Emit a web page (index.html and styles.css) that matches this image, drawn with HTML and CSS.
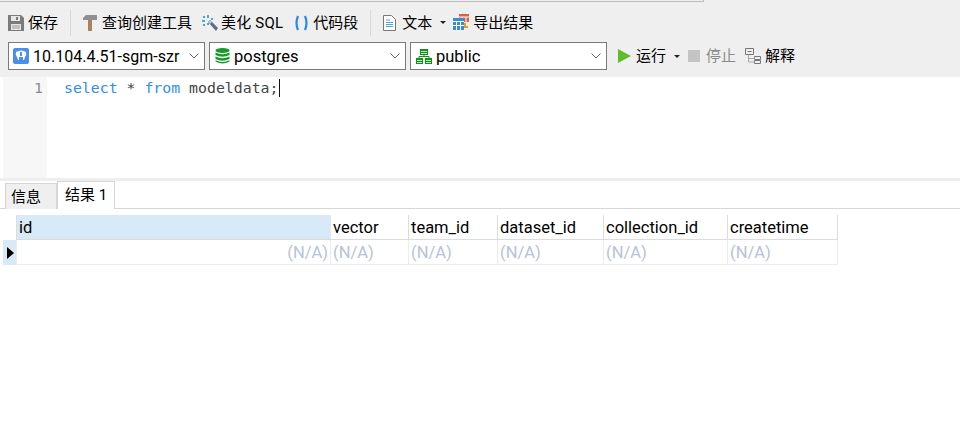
FILE: index.html
```html
<!DOCTYPE html>
<html lang="en">
<head>
  <meta charset="UTF-8">
  <title>Query</title>
  <link rel="stylesheet" href="styles.css">
</head>
<body>
<div class="top-edge"></div>

<div class="toolbar row-one">
  <div class="tool save">
    <svg width="16" height="16" viewBox="0 0 16 16"><path d="M0 0h13l3 3v13H0z" fill="#7b7b7b"/><rect x="3" y="1" width="9" height="5" fill="#e6e6e6"/><rect x="8" y="2" width="2" height="3" fill="#7b7b7b"/><rect x="3" y="9" width="10" height="6" fill="#e6e6e6"/><path d="M4 11h8M4 13h8" stroke="#999"/></svg>
    <span>保存</span>
  </div>
  <div class="sep sep-a"></div>
  <div class="tool hammer">
    <svg width="14" height="16" viewBox="0 0 14 16"><path d="M0 3l3-3h11v5H0z" fill="#909090"/><rect x="5" y="5" width="4" height="11" fill="#a5835f"/></svg>
    <span>查询创建工具</span>
  </div>
  <div class="tool wand">
    <svg width="16" height="16" viewBox="0 0 16 16"><path d="M6 7l2-2 8 8-2 3z" fill="#5c6f80"/><path d="M6 7l2-2 2 2-2 2z" fill="#b8c4ce"/><path d="M5 0h2v3H5zM5 8h2v2H5zM0 5h3v2H0zM9 3h2v2H9zM1 1h2v2H1zM1 9h2v2H1z" fill="#45a9dc"/></svg>
    <span>美化 SQL</span>
  </div>
  <div class="tool snippet">
    <svg width="15" height="16" viewBox="0 0 15 16"><path d="M4 1Q1 8 4 15M11 1q3 7 0 14" fill="none" stroke="#2e86e6" stroke-width="2.2"/></svg>
    <span>代码段</span>
  </div>
  <div class="sep sep-b"></div>
  <div class="tool doc">
    <svg width="13" height="16" viewBox="0 0 13 16"><path d="M.5.5h8l4 4v11H.5z" fill="#fff" stroke="#777"/><path d="M3 5h4M3 7.500h7M3 9.500h7M3 11.500h7" stroke="#4aa3df"/></svg>
    <span>文本</span>
    <i class="caret"></i>
  </div>
  <div class="tool export">
    <svg width="17" height="17" viewBox="0 0 17 17"><rect x="6" y="0" width="10" height="8" fill="#d0654a"/><path d="M9 3v5M13 3v5M6 3h10" stroke="#fff"/><rect x="0" y="4" width="11" height="12" fill="#3b8ccb"/><path d="M0 7.500h11M0 11.500h11M3.500 7v9M7.500 7v9" stroke="#fff"/><path d="M12 9v4h3" fill="none" stroke="#f09a1f" stroke-width="2"/></svg>
    <span>导出结果</span>
  </div>
</div>

<div class="toolbar row-two">
  <div class="select sel-conn">
    <svg width="16" height="16" viewBox="0 0 16 16"><rect width="16" height="16" rx="2" fill="#4a8ef0"/><path d="M3 4q5-3 10 0 1 3-1 5l-1 3h-1V9H6v3H5L4 9Q2 7 3 4z" fill="#fff"/><path d="M7 4h2v4H7z" fill="#4a8ef0"/></svg>
    <span class="sel-text">10.104.4.51-sgm-szr</span>
    <svg class="chev" width="10" height="6" viewBox="0 0 10 6"><path d="M.5.500l4.500 4.500 4.500-4.500" fill="none" stroke="#666"/></svg>
  </div>
  <div class="select sel-db">
    <svg width="15" height="16" viewBox="0 0 15 16"><ellipse cx="7.500" cy="2.500" rx="7" ry="2.500" fill="#159a2c"/><path d="M.5 4.500q7 3.500 14 0v2.500q-7 3.500-14 0zM.5 8.500q7 3.500 14 0V11q-7 3.500-14 0zM.5 12.300q7 3.500 14 0v1.200q-7 4-14 0z" fill="#159a2c"/></svg>
    <span class="sel-text">postgres</span>
    <svg class="chev" width="10" height="6" viewBox="0 0 10 6"><path d="M.5.500l4.500 4.500 4.500-4.500" fill="none" stroke="#666"/></svg>
  </div>
  <div class="select sel-schema">
    <svg width="16" height="15" viewBox="0 0 16 15"><path d="M4 0h8v6H4zM0 9h7v6H0zM9 9h7v6H9z" fill="#12911f"/><path d="M5 2.500h6M5 4.500h6M1 11.500h5M1 13.500h5M10 11.500h5M10 13.500h5" stroke="#bfe5c3"/><path d="M8 6v2M3 9V7.500h10V9" fill="none" stroke="#12911f"/></svg>
    <span class="sel-text">public</span>
    <svg class="chev" width="10" height="6" viewBox="0 0 10 6"><path d="M.5.500l4.500 4.500 4.500-4.500" fill="none" stroke="#666"/></svg>
  </div>
  <div class="tool run">
    <svg width="13" height="14" viewBox="0 0 13 14"><path d="M0 0l13 7-13 7z" fill="#63bb2c"/></svg>
    <span>运行</span>
    <i class="caret"></i>
  </div>
  <div class="tool stop">
    <i class="stop-box"></i>
    <span>停止</span>
  </div>
  <div class="tool explain">
    <svg width="16" height="16" viewBox="0 0 16 16"><g fill="none" stroke="#777"><path d="M.5.500h8v6h-8zM9.500 8.500h6v3h-6zM9.500 12.500h6v3h-6z"/><path d="M2.500 3.500h4"/><path d="M3.500 7v3.500h6M3.500 10v4h6" stroke="#aaa"/></g></svg>
    <span>解释</span>
  </div>
</div>

<div class="editor">
  <div class="gutter">1</div>
  <div class="code"><span class="kw">select</span> * <span class="kw">from</span> modeldata;<i class="cursor"></i></div>
</div>

<div class="split"></div>

<div class="tabs">
  <div class="tab">信息</div>
  <div class="tab active">结果 1</div>
</div>

<div class="grid">
  <div class="corner"></div>
  <div class="head selected">id</div>
  <div class="head">vector</div>
  <div class="head">team_id</div>
  <div class="head">dataset_id</div>
  <div class="head">collection_id</div>
  <div class="head">createtime</div>

  <div class="marker"><i></i></div>
  <div class="cell right">(N/A)</div>
  <div class="cell">(N/A)</div>
  <div class="cell">(N/A)</div>
  <div class="cell">(N/A)</div>
  <div class="cell">(N/A)</div>
  <div class="cell">(N/A)</div>
</div>
</body>
</html>
```

FILE: styles.css
```css
html, body {
  margin: 0;
  height: 100%;
  overflow: hidden;
}

/* the strip right of the top line keeps the toolbar colour */
body {
  background: linear-gradient(#efefef 2px, #fff 2px);
  color: #000;
  font-family: Roboto, "Noto Sans CJK SC", sans-serif;
  font-size: 15px;
}

.top-edge {
  box-sizing: border-box;
  width: 704px;
  height: 2px;
  border-right: 1px solid #bdbdbd;
  border-bottom: 1px solid #bdbdbd;
}

.top-edge, .toolbar {
  background: #efefef;
}

.toolbar {
  display: flex;
  align-items: center;
  box-sizing: border-box;
  padding-left: 8px;
}

.row-one {
  height: 38px;
  padding-top: 3px;
}

.row-two {
  height: 37px;
  padding-top: 2px;
  padding-bottom: 7px;
}

.tool {
  display: flex;
  align-items: center;
  white-space: nowrap;
}

.tool span {
  font-size: 15px;
  line-height: 20px;
}

.save span { margin-left: 4px; }
.sep {
  width: 1px;
  height: 26px;
  background: #d9d9d9;
}
.sep-a { margin-left: 12px; }
.hammer { margin-left: 12px; }
.hammer span { margin-left: 5px; }
.wand { margin-left: 10px; }
.wand span { margin-left: 3px; letter-spacing: 0.2px; }
.snippet { margin-left: 11px; }
.snippet span { margin-left: 4px; }
.sep-b { margin-left: 12px; }
.doc { margin-left: 12px; }
.doc span { margin-left: 6px; }
.export { margin-left: 7px; }
.export span { margin-left: 3px; }

.caret {
  width: 0;
  height: 0;
  margin-left: 8px;
  border-left: 3px solid transparent;
  border-right: 3px solid transparent;
  border-top: 3px solid #222;
}

.select {
  display: flex;
  align-items: center;
  box-sizing: border-box;
  width: 197px;
  height: 28px;
  margin-right: 4px;
  padding: 0 5px 0 5px;
  background: #fff;
  border: 1px solid #7a7a7a;
}

.sel-conn { padding-left: 4px; }

.sel-text {
  flex: 1;
  margin-left: 4px;
  font-size: 16.500px;
}

.sel-conn .sel-text {
  font-size: 16px;
}

.run { margin-left: 7px; }
.run span { margin-left: 5px; }
.stop { margin-left: 8px; }
.stop span { margin-left: 6px; color: #8a8a8a; }
.explain { margin-left: 9px; }
.explain span { margin-left: 4px; }

.stop-box {
  width: 12px;
  height: 12px;
  background: #c4c4c4;
}

.editor {
  display: flex;
  height: 101px;
  padding-left: 3px;
}

.gutter {
  box-sizing: border-box;
  width: 44px;
  padding: 1px 4px 0 0;
  text-align: right;
  background: #f7f7f7;
  color: #8c8c8c;
  font: 14.800px/20px "DejaVu Sans Mono", monospace;
}

.code {
  height: 20px;
  margin-top: 1px;
  padding-left: 17px;
  color: #444;
  font: 14.850px/20px "DejaVu Sans Mono", monospace;
  white-space: pre;
}

.kw { color: #2f8fe8; }

.cursor {
  display: inline-block;
  width: 1px;
  height: 18px;
  vertical-align: -4px;
  background: #111;
}

.split {
  height: 3px;
  background: #eeeeee;
}

.tabs {
  display: flex;
  align-items: flex-end;
  height: 27px;
  padding-left: 5px;
  border-bottom: 1px solid #d6d6d6;
}

.tab {
  box-sizing: border-box;
  width: 52px;
  height: 26px;
  margin-bottom: -1px;
  padding-left: 5px;
  background: #efefef;
  border: 1px solid #d6d6d6;
  border-bottom: none;
  line-height: 26px;
  font-size: 15px;
}

.tab.active {
  width: 58px;
  height: 28px;
  padding-left: 7px;
  background: #fff;
  line-height: 26px;
}

.grid {
  display: grid;
  grid-template-columns: 13px 315px 78px 89px 106px 124px 110px;
  grid-template-rows: 25px 25px;
  width: fit-content;
  margin: 6px 0 0 3px;
}

.head, .cell {
  box-sizing: border-box;
  padding: 0 2px;
  font-size: 16.500px;
  white-space: nowrap;
  overflow: hidden;
}

.head {
  line-height: 26px;
  border-right: 1px solid #dcdcdc;
  border-bottom: 1px solid #dcdcdc;
}

.head.selected {
  background: #d8e9f7;
  border-left: 1px solid #dcdcdc;
  border-right: none;
}

.cell {
  line-height: 26px;
  color: #b8c2d8;
  border-right: 1px solid #ececec;
  border-bottom: 1px solid #ececec;
}

.cell.right {
  text-align: right;
  border-left: 1px solid #ececec;
}

.marker {
  display: flex;
  align-items: center;
  justify-content: center;
  background: #d8e9f7;
}

.marker i {
  width: 0;
  height: 0;
  margin-left: 2px;
  border-left: 7px solid #000;
  border-top: 6px solid transparent;
  border-bottom: 6px solid transparent;
}
```
